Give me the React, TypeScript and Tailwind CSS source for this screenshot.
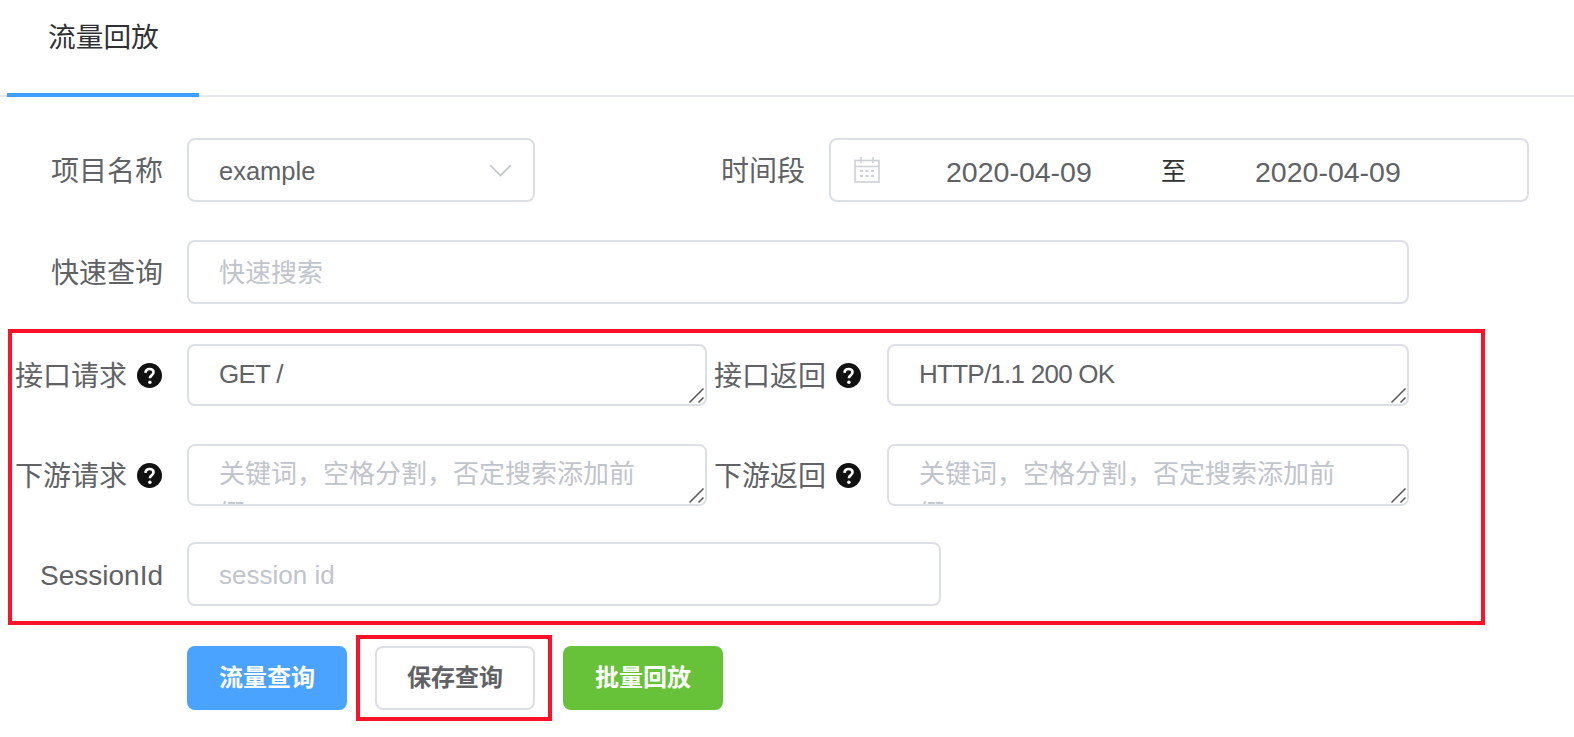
function Help() {
  return (
    <svg width="25" height="25" viewBox="0 0 26 26" className="shrink-0 -translate-y-[1px]">
      <circle cx="13" cy="13" r="13" fill="#111111" />
      <path d="M8.8 10.2c.2-2.6 2-4 4.3-4 2.4 0 4.1 1.4 4.1 3.5 0 1.6-.9 2.4-2 3.2-1.2.9-1.8 1.5-1.8 3" fill="none" stroke="#fff" strokeWidth="2.7" />
      <circle cx="13.4" cy="20" r="1.8" fill="#fff" />
    </svg>
  );
}
function Chevron() {
  return (
    <svg width="23" height="13" viewBox="0 0 23 13" className="shrink-0">
      <path d="M1 1l10.5 10.5L22 1" fill="none" stroke="#c0c4cc" strokeWidth="1.6" />
    </svg>
  );
}
function Calendar() {
  return (
    <svg width="26" height="26" viewBox="0 0 26 26" className="shrink-0">
      <g fill="none" stroke="#ccd0d6" strokeWidth="1.6">
        <rect x="1" y="3.5" width="24" height="21.5" />
        <path d="M1 9.5h24M7 0v6M19 0v6" />
      </g>
      <g fill="#ccd0d6">
        <rect x="6" y="13" width="3" height="2" />
        <rect x="11.5" y="13" width="3" height="2" />
        <rect x="17" y="13" width="3" height="2" />
        <rect x="6" y="18" width="3" height="2" />
        <rect x="11.5" y="18" width="3" height="2" />
        <rect x="17" y="18" width="3" height="2" />
      </g>
    </svg>
  );
}
const PH = "关键词，空格分割，否定搜索添加前缀...";
function Area({ value, placeholder }: { value?: string; placeholder?: string }) {
  return (
    <div className="relative">
      <textarea
        defaultValue={value}
        placeholder={placeholder}
        className="block h-[62px] w-full resize-none rounded-lg border-2 border-[#dcdfe6] bg-white px-[30px] py-[8px] text-[26px] leading-[40px] tracking-[-0.75px] text-[#606266] outline-none placeholder:tracking-normal placeholder:text-[#c0c4cc]"
      />
      <svg width="15" height="15" viewBox="0 0 15 15" className="pointer-events-none absolute bottom-[3px] right-[3px]">
        <path d="M0.5 14.5L14.5 0.5M9.5 14.5L14.5 9.5" stroke="#555" strokeWidth="1.5" fill="none" />
      </svg>
    </div>
  );
}
function Field({ placeholder, className }: { placeholder: string; className: string }) {
  return (
    <input
      placeholder={placeholder}
      className={"block h-[64px] rounded-lg border-2 border-[#dcdfe6] bg-white px-[30px] pt-[3px] text-[26px] text-[#606266] outline-none placeholder:text-[#c0c4cc] " + className}
    />
  );
}
function FirstLabel({ children }: { children: React.ReactNode }) {
  return <div className="flex w-[163px] shrink-0 items-center justify-end whitespace-nowrap pt-[3px] leading-[40px]">{children}</div>;
}
function HelpLabel({ text }: { text: string }) {
  return (
    <div className="flex w-[163px] shrink-0 items-center justify-end gap-[10px] whitespace-nowrap pr-[1px] pt-[3px] leading-[40px]">
      {text}
      <Help />
    </div>
  );
}
function SecondLabel({ text }: { text: string }) {
  return (
    <div className="ml-[9px] flex w-[146px] shrink-0 items-center justify-end gap-[10px] whitespace-nowrap pr-[1px] pt-[3px] leading-[40px]">
      {text}
      <Help />
    </div>
  );
}
export default function App() {
  return (
    <div className="relative h-[737px] w-[1574px] overflow-hidden bg-white font-['Liberation_Sans','Noto_Sans_CJK_SC',sans-serif] text-[28px] text-[#606266]">
      <div className="flex h-[97px] border-b-2 border-[#e4e7ed] pl-[7px]">
        <div className="-mb-[1px] h-[97px] w-[192px] border-b-4 border-[#409eff] pl-[41px] pt-[17px] text-[27.7px] leading-[42px] text-[#303133]">流量回放</div>
      </div>

      <div className="mt-[41px] flex h-[64px] items-center">
        <FirstLabel>项目名称</FirstLabel>
        <div className="ml-[24px] flex h-[64px] w-[348px] items-center justify-between rounded-lg border-2 border-[#dcdfe6] pl-[30px] pr-[21px]">
          <span className="pt-[3px] text-[25.5px]">example</span>
          <Chevron />
        </div>
        <div className="ml-[186px] w-[85px] whitespace-nowrap pt-[3px] leading-[40px]">时间段</div>
        <div className="ml-[23px] flex h-[64px] w-[700px] items-center rounded-lg border-2 border-[#dcdfe6] pl-[23px]">
          <Calendar />
          <span className="ml-[66px] w-[148px] whitespace-nowrap pt-[3px] text-[28.5px] leading-[40px]">2020-04-09</span>
          <span className="ml-[67px] pt-[1px] text-[25px] leading-[40px] text-[#303133]">至</span>
          <span className="ml-[69px] w-[148px] whitespace-nowrap pt-[3px] text-[28.5px] leading-[40px]">2020-04-09</span>
        </div>
      </div>

      <div className="mt-[38px] flex h-[64px] items-center">
        <FirstLabel>快速查询</FirstLabel>
        <Field placeholder="快速搜索" className="ml-[24px] w-[1222px]" />
      </div>

      <div className="mt-[40px] flex h-[62px] items-center">
        <HelpLabel text="接口请求" />
        <div className="ml-[24px] w-[520px]"><Area value="GET /" /></div>
        <SecondLabel text="接口返回" />
        <div className="ml-[25px] w-[522px]"><Area value="HTTP/1.1 200 OK" /></div>
      </div>

      <div className="mt-[38px] flex h-[62px] items-center">
        <HelpLabel text="下游请求" />
        <div className="ml-[24px] w-[520px]"><Area placeholder={PH} /></div>
        <SecondLabel text="下游返回" />
        <div className="ml-[25px] w-[522px]"><Area placeholder={PH} /></div>
      </div>

      <div className="mt-[36px] flex h-[64px] items-center">
        <FirstLabel>SessionId</FirstLabel>
        <Field placeholder="session id" className="ml-[24px] w-[754px]" />
      </div>

      <div className="ml-[187px] mt-[40px] flex h-[64px] text-[24px] font-semibold leading-[34px]">
        <button className="flex w-[160px] items-center justify-center rounded-lg bg-[#4aa3ff] text-white">流量查询</button>
        <button className="ml-[28px] flex w-[160px] items-center justify-center rounded-lg border-2 border-[#dcdfe6] bg-white text-[#606266]">保存查询</button>
        <button className="ml-[28px] flex w-[160px] items-center justify-center rounded-lg bg-[#67c23a] text-white">批量回放</button>
      </div>

      <div className="pointer-events-none absolute left-[8px] top-[329px] h-[296px] w-[1477px] border-4 border-[#ff1228]" />
      <div className="pointer-events-none absolute left-[356px] top-[635px] h-[86px] w-[196px] border-4 border-[#ff1228]" />
    </div>
  );
}
